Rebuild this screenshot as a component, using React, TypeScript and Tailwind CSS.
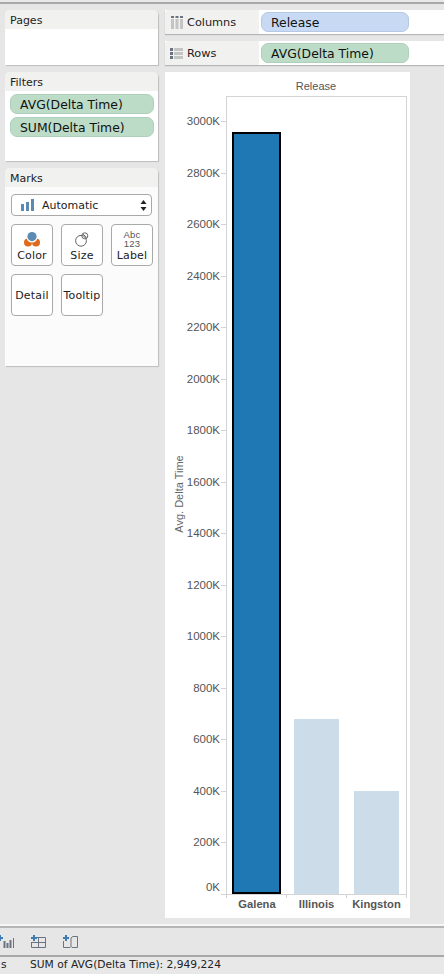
import React from 'react';

const uiFont = "font-['DejaVu_Sans',sans-serif]";
const chartFont = "'Liberation Sans', Arial, sans-serif";

const ticks = [3000, 2800, 2600, 2400, 2200, 2000, 1800, 1600, 1400, 1200, 1000, 800, 600, 400, 200, 0];

const ColumnsIcon = () => (
  <svg width="12" height="13" viewBox="0 0 12 13">
    <rect x="0" y="0" width="3" height="2" fill="#6b7280" />
    <rect x="4.5" y="0" width="3" height="2" fill="#6b7280" />
    <rect x="9" y="0" width="3" height="2" fill="#6b7280" />
    <rect x="0" y="3" width="3" height="10" fill="#c4c4c4" />
    <rect x="4.5" y="3" width="3" height="10" fill="#c4c4c4" />
    <rect x="9" y="3" width="3" height="10" fill="#c4c4c4" />
  </svg>
);

const RowsIcon = () => (
  <svg width="13" height="11" viewBox="0 0 13 11">
    <rect x="0" y="0" width="3" height="3" fill="#6b7280" />
    <rect x="0" y="4" width="3" height="3" fill="#6b7280" />
    <rect x="0" y="8" width="3" height="3" fill="#6b7280" />
    <rect x="4" y="0" width="9" height="3" fill="#c4c4c4" />
    <rect x="4" y="4" width="9" height="3" fill="#c4c4c4" />
    <rect x="4" y="8" width="9" height="3" fill="#c4c4c4" />
  </svg>
);

const Card = ({ title, bodyClass, children }: { title: string; bodyClass: string; children?: React.ReactNode }) => (
  <div className="bg-white rounded-t-[5px] shadow-[1px_1px_1px_#bdbdbd]">
    <div className="h-[19px] bg-[#f1f1f0] rounded-t-[5px] pl-[5px] pt-[2px] text-[11px] leading-[17px] text-[#222]">{title}</div>
    <div className={bodyClass}>{children}</div>
  </div>
);

const Pill = ({ label, color }: { label: string; color: string }) => (
  <div className={`h-[20px] rounded-[7px] border pl-[9px] text-[12.4px] leading-[19px] text-[#111] ${color}`}>{label}</div>
);

const ShelfRow = ({ icon, label, pill, color }: { icon: React.ReactNode; label: string; pill: string; color: string }) => (
  <div className="h-[24px] flex bg-white shadow-[0_1px_1px_#b5b5b5]">
    <div className="w-[94px] bg-[#f1f1f0] rounded-tl-[4px] flex items-center gap-[4px] pl-[5px] text-[11.3px] text-[#222]">
      <div className="w-[13px] shrink-0 flex justify-center">{icon}</div>
      <span className="pt-[3px]">{label}</span>
    </div>
    <div className="w-[148px] ml-[2px] pt-[2px]">
      <Pill label={pill} color={color} />
    </div>
  </div>
);

const MarkButton = ({ label, icon }: { label: string; icon?: React.ReactNode }) => (
  <div className={`w-[42px] h-[42px] rounded-[4px] border border-[#a9a9a9] bg-white flex flex-col items-center text-[11px] tracking-[0.2px] text-[#222] ${icon ? 'justify-end pb-[2px]' : 'justify-center'}`}>
    {icon}
    <span className="leading-[15px] whitespace-nowrap">{label}</span>
  </div>
);

const ColorIcon = () => (
  <svg width="16" height="15" viewBox="0 0 16 15" className="mb-[1px]">
    <circle cx="4" cy="10.5" r="4" fill="#df6a1c" />
    <circle cx="12" cy="10.5" r="4" fill="#df6a1c" />
    <circle cx="8" cy="5" r="5.6" fill="#fff" />
    <circle cx="8" cy="4.6" r="4.6" fill="#5b8bb3" />
  </svg>
);

const SizeIcon = () => (
  <svg width="14" height="15" viewBox="0 0 14 15" fill="none" stroke="#666" strokeWidth="1" className="mb-[1px]">
    <circle cx="6" cy="8.8" r="5.4" />
    <circle cx="9.8" cy="3.8" r="3" />
    <path d="M8 2.2l3.6 3.2" />
  </svg>
);

const LabelIcon = () => (
  <div className="flex flex-col items-center text-[9.5px] leading-[9px] text-[#555] font-['Liberation_Sans',sans-serif]">
    <span>Abc</span>
    <span>123</span>
  </div>
);

const Chart = () => {
  const yOf = (v: number) => 894 - 72 - (v / 3000) * 773;
  return (
    <svg width="245" height="846" viewBox="0 0 245 846" className="block" style={{ fontFamily: chartFont }}>
      <text x="151" y="18" fontSize="11" fill="#555" textAnchor="middle">Release</text>
      <rect x="61.5" y="24.5" width="180" height="798" fill="none" stroke="#d4d4d4" />
      {ticks.map((t) => (
        <g key={t}>
          <line x1="56" x2="61" y1={Math.round(yOf(t)) + 0.5} y2={Math.round(yOf(t)) + 0.5} stroke="#d4d4d4" />
          <text x="55" y={t === 0 ? 819 : yOf(t) + 4} fontSize="11.5" fill="#555" textAnchor="end">{`${t}K`}</text>
        </g>
      ))}
      <rect x="68" y="61" width="47" height="760" fill="#1f77b4" stroke="#000" strokeWidth="2" />
      <rect x="129" y="647" width="45" height="175" fill="#cddce9" />
      <rect x="189" y="719" width="45" height="103" fill="#cddce9" />
      {[61.5, 121.5, 181.5, 241.5].map((x) => (
        <line key={x} x1={x} x2={x} y1="822" y2="826" stroke="#d4d4d4" />
      ))}
      <line x1="56" x2="242" y1="822.5" y2="822.5" stroke="#d4d4d4" />
      <text x="92" y="836" fontSize="11.2" fontWeight="700" fill="#555" textAnchor="middle">Galena</text>
      <text x="151.5" y="836" fontSize="11.2" fontWeight="700" fill="#555" textAnchor="middle">Illinois</text>
      <text x="211.5" y="836" fontSize="11.2" fontWeight="700" fill="#555" textAnchor="middle">Kingston</text>
      <text transform="translate(18 422) rotate(-90)" fontSize="11" fill="#666" textAnchor="middle">Avg. Delta Time</text>
    </svg>
  );
};

const AddSheetIcon = () => (
  <svg width="17" height="13" viewBox="0 0 17 13" fill="none" stroke="#6b7280" className="-ml-[3px] shrink-0">
    <path d="M3 0v6M0 3h6" stroke="#3f7cb5" strokeWidth="2" />
    <path d="M7.5 13V6M10.5 13V8M13.5 13V5" strokeWidth="2" />
    <path d="M16.5 13V3" />
  </svg>
);

const AddDashboardIcon = () => (
  <svg width="15" height="13" viewBox="0 0 15 13" fill="none" stroke="#6b7280" className="shrink-0">
    <path d="M6 2.5h8.5v10H.5V7M.5 7.5h14M7.5 2.5v10" />
    <path d="M3 0v6M0 3h6" stroke="#3f7cb5" strokeWidth="2" />
  </svg>
);

const AddStoryIcon = () => (
  <svg width="15" height="13" viewBox="0 0 15 13" fill="none" stroke="#6b7280" className="shrink-0">
    <path d="M.5 6v6.5h6.5l1-1 1 1h5.5V1.5H10L8 3v8.5" />
    <path d="M3 0v6M0 3h6" stroke="#3f7cb5" strokeWidth="2" />
  </svg>
);

export default function App() {
  return (
    <div className={`w-[444px] h-[974px] overflow-hidden flex flex-col bg-[#e6e6e6] ${uiFont}`}>
      <div className="h-[4px] shrink-0 border-b-2 border-[#a8a8a8] bg-[#e8e8e8]" />
      <div className="h-[920px] shrink-0 flex pt-[6px]">
        <div className="w-[153px] ml-[5px] flex flex-col gap-[7px]">
          <Card title="Pages" bodyClass="h-[36px]" />
          <Card title="Filters" bodyClass="h-[70px] pl-[5px] pr-[4px] pt-[3px] flex flex-col gap-[3px]">
            <Pill label="AVG(Delta Time)" color="bg-[#bcdcc8] border-[#add0bb]" />
            <Pill label="SUM(Delta Time)" color="bg-[#bcdcc8] border-[#add0bb]" />
          </Card>
          <Card title="Marks" bodyClass="h-[179px] px-[6px] pt-[7px] bg-[#fbfbfb]">
            <div className="h-[22px] rounded-[4px] border border-[#a9a9a9] bg-white flex items-center pl-[9px] pr-[4px] text-[11px] text-[#222]">
              <svg width="14" height="12" viewBox="0 0 14 12" className="mr-[7px] shrink-0">
                <rect x="0" y="5" width="3" height="7" fill="#5b8bb3" />
                <rect x="5" y="3" width="3" height="9" fill="#5b8bb3" />
                <rect x="10" y="0" width="3" height="12" fill="#5b8bb3" />
              </svg>
              <span className="flex-1 pt-[3px]">Automatic</span>
              <svg width="7" height="11" viewBox="0 0 7 11">
                <path d="M3.5 0L6.5 4H0.5zM3.5 11L0.5 7H6.5z" fill="#222" />
              </svg>
            </div>
            <div className="mt-[8px] grid grid-cols-[42px_42px_42px] gap-x-[8px] gap-y-[8px]">
              <MarkButton label="Color" icon={<ColorIcon />} />
              <MarkButton label="Size" icon={<SizeIcon />} />
              <MarkButton label="Label" icon={<LabelIcon />} />
              <MarkButton label="Detail" />
              <MarkButton label="Tooltip" />
            </div>
          </Card>
        </div>
        <div className="flex-1 ml-[7px] flex flex-col gap-[7px]">
          <ShelfRow icon={<ColumnsIcon />} label="Columns" pill="Release" color="bg-[#c8daf3] border-[#b5c9e6]" />
          <ShelfRow icon={<RowsIcon />} label="Rows" pill="AVG(Delta Time)" color="bg-[#bcdcc8] border-[#add0bb]" />
          <div className="w-[245px] h-[846px] bg-white">
            <Chart />
          </div>
        </div>
      </div>
      <div className="h-[2px] shrink-0 bg-[#f6f6f6]" />
      <div className="h-[31px] shrink-0 border-t-2 border-b-2 border-t-[#b5b5b5] border-b-[#a8a8a8] flex items-center gap-[17px]">
        <AddSheetIcon />
        <AddDashboardIcon />
        <AddStoryIcon />
      </div>
      <div className="flex-1 bg-[#e8e8e8] flex items-center pl-[1px] text-[10.7px] text-[#222]">
        <span className="w-[29px]">s</span>
        <span>SUM of AVG(Delta Time): 2,949,224</span>
      </div>
    </div>
  );
}
